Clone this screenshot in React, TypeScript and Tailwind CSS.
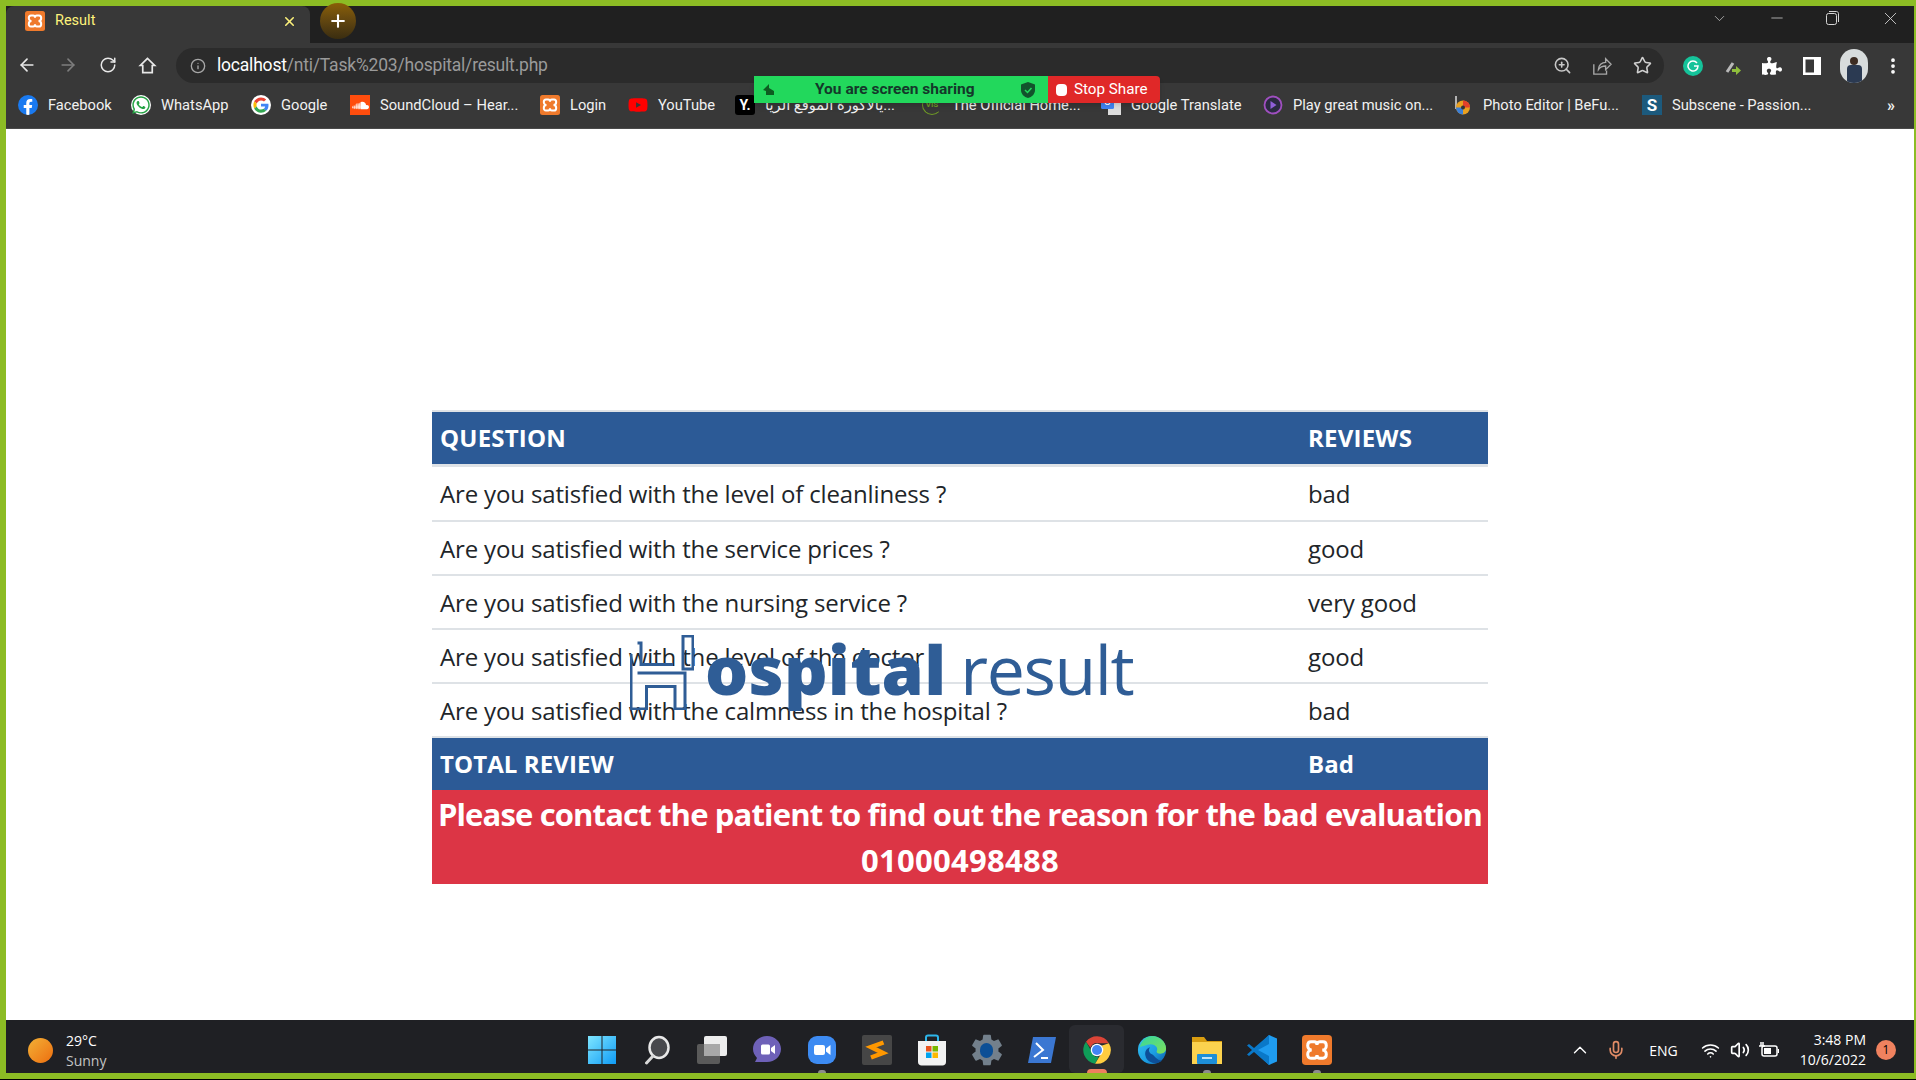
import { ArrowLeft, ArrowRight, ChevronDown, ChevronUp, Info, Mic, Minus, MoreVertical, Plus, RotateCw, Star, Volume2, Wifi, X, ZoomIn } from 'lucide-react'
import { FaFacebookF, FaPuzzlePiece, FaSoundcloud, FaWhatsapp, FaYoutube } from 'react-icons/fa'
import { IoSettingsSharp } from 'react-icons/io5'

function Xampp({ size = 20 }: { size?: number }) {
  return (
    <svg width={size} height={size} viewBox="0 0 20 20" className="shrink-0">
      <rect width="20" height="20" rx="2.5" fill="#ef7a2c" />
      <path d="M6 4.5h2.2c1.4 0 1.8 1.3 1.8 2.2 0-.9.4-2.2 1.8-2.2H14c1.6 0 2.2 1.2 2.2 2.6 0 1.5-1.1 2.9-2.7 2.9 1.6 0 2.7 1.4 2.7 2.9 0 1.4-.6 2.6-2.2 2.6h-2.2c-1.4 0-1.8-1.3-1.8-2.2 0 .9-.4 2.2-1.8 2.2H6c-1.6 0-2.2-1.2-2.2-2.6 0-1.5 1.1-2.9 2.7-2.9-1.6 0-2.7-1.4-2.7-2.9 0-1.4.6-2.6 2.2-2.6z" fill="none" stroke="#fff" strokeWidth="2" />
    </svg>
  )
}

function GoogleG() {
  return (
    <svg width="20" height="20" viewBox="0 0 48 48" className="shrink-0">
      <circle cx="24" cy="24" r="24" fill="#fff" />
      <path fill="#EA4335" d="M24 13c2.9 0 5.300 1 7.200 2.800l5.300-5.300C33.300 7.500 29 5.700 24 5.700c-7.200 0-13.400 4.100-16.400 10.100l6.200 4.800C15.200 16.200 19.200 13 24 13z" />
      <path fill="#4285F4" d="M42 24.500c0-1.300-.1-2.500-.3-3.700H24v7h10.100c-.4 2.300-1.700 4.300-3.700 5.600l6 4.600C40 34.700 42 30 42 24.500z" />
      <path fill="#FBBC05" d="M13.800 27.400c-.4-1.100-.6-2.300-.6-3.400s.2-2.300.6-3.400l-6.200-4.800C6.400 18.300 5.700 21 5.700 24s.7 5.700 1.900 8.200z" />
      <path fill="#34A853" d="M24 42.300c5 0 9.100-1.600 12.400-4.500l-6-4.600c-1.700 1.100-3.800 1.800-6.400 1.800-4.800 0-8.800-3.200-10.200-7.600l-6.200 4.800c3 6 9.200 10.100 16.400 10.100z" />
    </svg>
  )
}

function Chrome() {
  return (
    <svg width="30" height="30" viewBox="0 0 48 48">
      <path fill="#DB4437" d="M24 2a22 22 0 0 1 19 11H24a11 11 0 0 0-10.500 7.500L6.400 10.800A22 22 0 0 1 24 2z" />
      <path fill="#0F9D58" d="M6.400 10.800l9.500 16.800A9 9 0 0 0 27 34.500L21 45.800A22 22 0 0 1 6.400 10.800z" />
      <path fill="#FFCD40" d="M43 13a22 22 0 0 1-22 32.800l9.800-16.300A9 9 0 0 0 31 17z" />
      <circle cx="24" cy="24" r="10" fill="#fff" />
      <circle cx="24" cy="24" r="8" fill="#4285F4" />
    </svg>
  )
}

function Edge() {
  return (
    <svg width="30" height="32" viewBox="0 0 32 32">
      <defs>
        <linearGradient id="edgeA" x1="0" y1="0" x2="1" y2="1">
          <stop offset="0" stopColor="#35c1f1" />
          <stop offset="0.6" stopColor="#1b9de2" />
          <stop offset="1" stopColor="#0c59a4" />
        </linearGradient>
        <linearGradient id="edgeB" x1="0" y1="0" x2="1" y2="1">
          <stop offset="0" stopColor="#34d6a0" />
          <stop offset="1" stopColor="#7fe05a" />
        </linearGradient>
      </defs>
      <circle cx="16" cy="16" r="15" fill="url(#edgeA)" />
      <path d="M3 13C5 5 11 1 16 1c8 0 15 6 15 13.500 0 3.500-3 5.500-6 5.500-3 0-4.500-1.500-4-3 .5-1 1-2 0-4-2-3-6-4-10-2.500C8 11.500 5 12 3 13z" fill="url(#edgeB)" />
      <path d="M17 21c-3-1-6-4-3-8-4 1-6 5-5 9 1 5 6 8 11 8 3 0 5-1 7-3-4 1-7-3-10-6z" fill="#0d4f98" />
    </svg>
  )
}

function TaskbarIcon({ name }: { name: string }) {
  if (name === 'windows') {
    return (
      <svg width="30" height="30" viewBox="0 0 30 30">
        <defs>
          <linearGradient id="win" x1="0" y1="0" x2="1" y2="1">
            <stop offset="0" stopColor="#7fe6ff" />
            <stop offset="1" stopColor="#0f9bf5" />
          </linearGradient>
        </defs>
        <path d="M1 1h13.500v13.500H1zM15.500 1H29v13.500H15.500zM1 15.500h13.500V29H1zM15.500 15.500H29V29H15.500z" fill="url(#win)" />
      </svg>
    )
  }
  if (name === 'search') {
    return (
      <svg width="30" height="30" viewBox="0 0 30 30">
        <ellipse cx="17" cy="12.500" rx="9.500" ry="10.500" fill="#48494d" stroke="#e8e8e8" strokeWidth="2.500" />
        <path d="M11 21L4.500 28" stroke="#d8d8d8" strokeWidth="3" strokeLinecap="round" />
      </svg>
    )
  }
  if (name === 'taskview') {
    return (
      <svg width="32" height="30" viewBox="0 0 32 30">
        <rect x="1" y="9" width="23" height="20" rx="2" fill="#5a5a5a" />
        <rect x="8" y="1" width="23" height="20" rx="2" fill="#ededed" />
        <rect x="8" y="9" width="16" height="12" fill="#a8a8a8" />
      </svg>
    )
  }
  if (name === 'teams') {
    return (
      <svg width="30" height="30" viewBox="0 0 30 30">
        <path d="M15 1c8 0 14 6 14 13s-6 13-14 13H3l2-4C2.500 20 1 17.500 1 14 1 7 7 1 15 1z" fill="#6e61b8" />
        <rect x="9" y="9.500" width="9" height="10" rx="1.500" fill="#fff" />
        <path d="M19 13l4-3v9l-4-3z" fill="#fff" />
      </svg>
    )
  }
  if (name === 'zoom') {
    return (
      <svg width="30" height="30" viewBox="0 0 30 30">
        <rect x="1" y="1" width="28" height="28" rx="9" fill="#3d8bf2" />
        <rect x="7" y="10" width="11" height="10" rx="2" fill="#fff" />
        <path d="M19 13.500l4.500-3.500v10L19 16.500z" fill="#fff" />
      </svg>
    )
  }
  if (name === 'sublime') {
    return (
      <svg width="30" height="30" viewBox="0 0 30 30">
        <rect width="30" height="30" rx="2" fill="#464646" />
        <path d="M21.500 7.500L9 12l12 6L9 22.500" fill="none" stroke="#ff9800" strokeWidth="4.500" />
      </svg>
    )
  }
  if (name === 'store') {
    return (
      <svg width="30" height="32" viewBox="0 0 30 32">
        <path d="M9 7V3.500C9 2 10 1.500 11 1.500h8c1 0 2 .5 2 2V7" fill="none" stroke="#2db5ea" strokeWidth="2" />
        <path d="M1 7h28v21c0 2-1.500 3.500-3.500 3.500h-21C2.500 31.500 1 30 1 28z" fill="#f2f2f2" />
        <rect x="9" y="12" width="5.500" height="5.500" fill="#e8541f" />
        <rect x="15.500" y="12" width="5.500" height="5.500" fill="#78b800" />
        <rect x="9" y="18.500" width="5.500" height="5.500" fill="#00a3ee" />
        <rect x="15.500" y="18.500" width="5.500" height="5.500" fill="#fdb900" />
      </svg>
    )
  }
  if (name === 'settings') {
    return (
      <div className="relative flex items-center justify-center">
        <IoSettingsSharp size={34} color="#73808c" />
        <span className="absolute h-[15px] w-[13px] rounded-full bg-[#0c4f96]" />
      </div>
    )
  }
  if (name === 'powershell') {
    return (
      <svg width="30" height="30" viewBox="0 0 30 30">
        <path d="M6 2h23l-5 26H1z" fill="#3b77d2" />
        <path d="M9 8l7 7-9 7" fill="none" stroke="#fff" strokeWidth="2" />
        <path d="M14 23h7" stroke="#fff" strokeWidth="2" />
      </svg>
    )
  }
  if (name === 'chrome') return <Chrome />
  if (name === 'edge') return <Edge />
  if (name === 'folder') {
    return (
      <svg width="32" height="30" viewBox="0 0 32 30">
        <path d="M1 2h12l3 4h15v3H1z" fill="#d99d10" />
        <path d="M1 7h30v22H1z" fill="#fcd24e" />
        <rect x="6" y="19" width="20" height="10" rx="1" fill="#1e8fd8" />
        <rect x="11" y="22" width="10" height="2" fill="#bfe3f7" />
      </svg>
    )
  }
  if (name === 'vscode') {
    return (
      <svg width="32" height="32" viewBox="0 0 32 32">
        <path d="M23 1l8 3.500v23L23 31 8 17z" fill="#1f9cf0" />
        <path d="M23 1v9L12 16l11 6v9L8 18 3 22l-2-1.500L6 16 1 11.500 3 10l5 4z" fill="#0a78c8" />
      </svg>
    )
  }
  return <Xampp size={30} />
}

const bookmarks = [
  { label: 'Facebook', width: 'w-[113px]', icon: <span className="flex h-5 w-5 shrink-0 items-end justify-center overflow-hidden rounded-full bg-[#1a7af0] text-white"><FaFacebookF size={16} /></span> },
  { label: 'WhatsApp', width: 'w-[120px]', icon: <span className="flex h-5 w-5 shrink-0 items-center justify-center rounded-full bg-white"><FaWhatsapp size={20} color="#25a244" /></span> },
  { label: 'Google', width: 'w-[99px]', icon: <GoogleG /> },
  { label: 'SoundCloud – Hear...', width: 'w-[190px]', icon: <span className="flex h-5 w-5 shrink-0 items-center justify-center bg-[#ff4d0d] text-white"><FaSoundcloud size={17} /></span> },
  { label: 'Login', width: 'w-[88px]', icon: <Xampp /> },
  { label: 'YouTube', width: 'w-[107px]', icon: <span className="flex h-5 w-5 shrink-0 items-center justify-center"><FaYoutube size={20} color="#f00" /></span> },
  { label: 'يالاكورة الموقع الريا...', width: 'w-[187px]', icon: <span className="flex h-5 w-5 shrink-0 items-center justify-center rounded-[3px] bg-black text-[14px] font-bold text-white">Y.</span> },
  { label: 'The Official Home...', width: 'w-[179px]', icon: <span className="flex h-5 w-5 shrink-0 items-center justify-center rounded-full border-[1.5px] border-b-[#6f9a25] border-l-[#6f9a25] border-r-transparent border-t-transparent text-[8px] font-bold text-[#6f9a25]">VIS</span> },
  { label: 'Google Translate', width: 'w-[162px]', icon: <svg width="20" height="20" viewBox="0 0 20 20" className="shrink-0"><rect x="7" y="5" width="13" height="15" fill="#ddd" /><rect width="13" height="14" rx="1.500" fill="#4285f4" /><circle cx="6.500" cy="7" r="2.500" fill="none" stroke="#fff" strokeWidth="1.200" /></svg> },
  { label: 'Play great music on...', width: 'w-[190px]', icon: <svg width="20" height="20" viewBox="0 0 20 20" className="shrink-0"><circle cx="10" cy="10" r="8.500" fill="#2a2a40" stroke="#a04fc0" strokeWidth="1.800" /><path d="M7.500 6l6 4-6 4z" fill="#8f5fd8" /></svg> },
  { label: 'Photo Editor | BeFu...', width: 'w-[189px]', icon: <svg width="20" height="20" viewBox="0 0 20 20" className="shrink-0"><path d="M3 1v13" stroke="#ddd" strokeWidth="1.500" /><circle cx="10" cy="12.500" r="7" fill="#e9a020" /><path d="M10 5.500a7 7 0 0 1 7 7h-7z" fill="#e3402a" /><path d="M10 12.500v7a7 7 0 0 1-7-7z" fill="#3b7fd6" /><circle cx="10" cy="12.500" r="2" fill="#333" /></svg> },
  { label: 'Subscene - Passion...', width: 'w-[200px]', icon: <span className="flex h-5 w-5 shrink-0 items-center justify-center bg-[#1c5a7d] text-[17px] font-bold text-white">S</span> },
]

const taskbarIcons = ['windows', 'search', 'taskview', 'teams', 'zoom', 'sublime', 'store', 'settings', 'powershell', 'chrome', 'edge', 'folder', 'vscode', 'xampp']
const runningApps = ['zoom', 'folder', 'xampp']

const answers = [
  ['Are you satisfied with the level of cleanliness ?', 'bad'],
  ['Are you satisfied with the service prices ?', 'good'],
  ['Are you satisfied with the nursing service ?', 'very good'],
  ['Are you satisfied with the level of the doctor ?', 'good'],
  ['Are you satisfied with the calmness in the hospital ?', 'bad'],
]

export default function App() {
  return (
    <div className="relative h-[1080px] w-[1916px] overflow-hidden border-b border-black bg-[#8cbc24] pt-[6px] pr-[2px] pb-[6px] pl-[6px] font-['Open_Sans',sans-serif]">
      <div className="flex h-[1067px] flex-col bg-white">
        {/* Browser chrome */}
        <div className="font-['Roboto',sans-serif]">
          <div className="flex h-[37px] items-start bg-[#202020]">
            <div className="flex h-[37px] w-[304px] items-center rounded-t-lg bg-[#383838] pr-[13px] pb-[7px] pl-[19px]">
              <Xampp />
              <span className="ml-[10px] flex-1 text-[14.500px] text-[#fdf27b]">Result</span>
              <X size={15} color="#fdf27b" strokeWidth={2.5} />
            </div>
            <div className="mt-[-3px] ml-[10px] flex h-[36px] w-[36px] items-center justify-center rounded-full bg-gradient-to-b from-[#8a5f06] to-[#3a2d10] text-white">
              <Plus size={20} strokeWidth={2.5} />
            </div>
            <div className="ml-auto flex h-[24px] items-center text-[#d5d5d5]">
              <ChevronDown size={17} strokeWidth={1} />
              <Minus size={18} strokeWidth={1} className="ml-[40px]" />
              <svg width="13" height="14" viewBox="0 0 13 14" fill="none" stroke="currentColor" className="ml-[40px]">
                <rect x="0.500" y="2.500" width="10" height="11" rx="2" />
                <path d="M3 .5h7.500c1 0 2 1 2 2V11" />
              </svg>
              <X size={21} strokeWidth={1} className="mr-[13px] ml-[41px]" />
            </div>
          </div>

          <div className="flex h-[40px] items-end bg-[#383838]">
            <div className="mb-[8px] flex w-[170px] items-center text-[#e8e8e8]">
              <ArrowLeft size={20} className="ml-[11px]" />
              <ArrowRight size={20} color="#7d7d7d" className="ml-[21px]" />
              <RotateCw size={18} className="ml-[21px]" />
              <svg width="19" height="19" viewBox="0 0 20 20" fill="none" stroke="currentColor" strokeWidth="1.800" className="ml-[21px]">
                <path d="M10 2.500L2.500 10H5v7.500h10V10h2.500z" />
              </svg>
            </div>
            <div className="flex h-[35px] w-[1488px] items-center rounded-full bg-[#2b2b2b] pr-[9px] pl-[14px]">
              <Info size={16} color="#a8a8a8" />
              <span className="ml-[11px] flex-1 text-[17.500px] tracking-[-0.2px] text-[#9a9a9a]">
                <span className="text-white">localhost</span>/nti/Task%203/hospital/result.php
              </span>
              <ZoomIn size={19} color="#c8c8c8" />
              <svg width="20" height="20" viewBox="0 0 22 22" fill="none" stroke="#a8a8a8" strokeWidth="1.500" className="ml-[20px]">
                <path d="M2 9v11h14v-4" />
                <path d="M7 15c0-5 4-8 8-8V3l6 6-6 6v-4c-3 0-6 1-8 4z" />
              </svg>
              <Star size={19} color="#d0d0d0" className="mr-[3px] ml-[21px]" />
            </div>
            <div className="flex h-[35px] items-center text-white">
              <span className="ml-[19px] flex h-5 w-5 items-center justify-center rounded-full bg-[#15c39a]">
                <svg width="12" height="12" viewBox="0 0 12 12" fill="none" stroke="#fff" strokeWidth="1.500"><path d="M10 3a5 5 0 1 0 1 3H7" /></svg>
              </span>
              <svg width="20" height="20" viewBox="0 0 20 20" className="ml-[20px]">
                <path d="M4 16l6-9" stroke="#b9b9b9" strokeWidth="3" fill="none" />
                <path d="M9 13h4v-3l5 4.500-5 4.500v-3H9z" fill="#8fbe3c" />
              </svg>
              <FaPuzzlePiece size={20} className="ml-[19px]" />
              <svg width="18" height="18" viewBox="0 0 18 18" className="ml-[21px]"><path d="M0 0h18v18H0z" fill="#fff" /><path d="M2.500 2.500h8.500v13H2.500z" fill="#383838" /></svg>
              <span className="relative ml-[19px] h-[34px] w-[28px] overflow-hidden rounded-full bg-[#d8dcdc]">
                <span className="absolute top-[8px] left-[10px] h-[8px] w-[8px] rounded-full bg-[#3d2c22]" />
                <span className="absolute top-[16px] left-[7px] h-[18px] w-[15px] rounded-t bg-[#2b3a52]" />
              </span>
              <MoreVertical size={20} strokeWidth={2.5} className="ml-[15px]" />
            </div>
          </div>

          <div className="flex h-[46px] items-center border-b border-[#4a4a4a] bg-[#383838] pl-[12px] text-[14.700px] text-[#f1f1f1]">
            {bookmarks.map((b) => (
              <div key={b.label} className={`flex shrink-0 items-center gap-[10px] ${b.width}`}>
                {b.icon}
                <span className="whitespace-nowrap font-['Roboto','DejaVu_Sans',sans-serif]">{b.label}</span>
              </div>
            ))}
            <span className="mr-[19px] ml-auto text-[16px] font-bold">»</span>
          </div>
        </div>

        {/* Page */}
        <div className="relative flex-1">
          <div className="mx-auto mt-[281px] w-[1056px] text-[24px] tracking-[-0.15px] text-[#212529]">
            <table className="w-full border-separate border-spacing-0">
              <thead>
                <tr className="h-[57px] bg-[#2c5a96] text-left font-bold tracking-[0.2px] text-white">
                  <th className="w-[868px] border-t-2 border-b-[3px] border-[#dee2e6] px-2">QUESTION</th>
                  <th className="border-t-2 border-b-[3px] border-[#dee2e6] px-2">REVIEWS</th>
                </tr>
              </thead>
              <tbody>
                {answers.map(([question, review], i) => (
                  <tr key={question} className={i === 0 ? 'h-[55px]' : 'h-[54px]'}>
                    <td className="border-b-2 border-[#dee2e6] px-2 pt-[1px]">{question}</td>
                    <td className="border-b-2 border-[#dee2e6] px-2 pt-[1px]">{review}</td>
                  </tr>
                ))}
                <tr className="h-[52px] bg-[#2c5a96] font-bold tracking-[0.1px] text-white">
                  <td className="px-2">TOTAL REVIEW</td>
                  <td className="px-2">Bad</td>
                </tr>
              </tbody>
            </table>
            <div className="h-[94px] bg-[#dc3545] pt-[1px] text-center text-[31px] leading-[46px] font-bold text-white">
              <div className="tracking-[-0.85px]">Please contact the patient to find out the reason for the bad evaluation</div>
              <div className="tracking-[0.27px]">01000498488</div>
            </div>
          </div>

          {/* Heading that sits over the table */}
          <div className="absolute top-[506px] left-[624px] flex items-start text-[#2f5d96]">
            <svg width="64" height="75" viewBox="0 -1 64 75" fill="none" stroke="currentColor" strokeWidth="3">
              <path d="M7.500 7h3.500v21.500h32" />
              <path d="M53 0h10v33H53z" />
              <path d="M7.500 37H55v36H45V50.500H16.500V73H1V18" />
            </svg>
            <h1 className="ml-[11px] text-[68px] leading-none font-extrabold tracking-[0.2px]">ospital</h1>
            <span className="ml-[14px] text-[68px] leading-none font-medium tracking-[-1.4px]">result</span>
          </div>
        </div>

        {/* Taskbar */}
        <div className="flex h-[53px] items-end bg-[#1f2024] text-white">
          <div className="flex h-[53px] w-[568px] items-center pt-[8px] pl-[22px]">
            <span className="h-[25px] w-[25px] rounded-full bg-gradient-to-br from-[#f2b035] to-[#ec6d0c]" />
            <div className="ml-[13px] text-[14px] leading-[20px]">
              <div>29°C</div>
              <div className="text-[#c4c4c4]">Sunny</div>
            </div>
          </div>
          <div className="flex">
            {taskbarIcons.map((name) => (
              <div key={name} className={`relative flex h-[48px] w-[55px] items-center justify-center pt-[2px] ${name === 'chrome' ? 'rounded-md bg-[#2a2b30]' : ''}`}>
                <TaskbarIcon name={name} />
                {runningApps.includes(name) && <span className="absolute bottom-0 h-[3px] w-[8px] rounded-t-full bg-[#8c8c8c]" />}
                {name === 'chrome' && <span className="absolute bottom-0 h-[4px] w-[20px] rounded-t-sm bg-[#ee7f5f]" />}
              </div>
            ))}
          </div>
          <div className="ml-auto flex h-[53px] items-center pt-[7px] pr-[18px]">
            <ChevronUp size={22} strokeWidth={1.5} />
            <Mic size={20} color="#e08b66" className="ml-[15px]" />
            <span className="ml-[23px] text-[14px]">ENG</span>
            <Wifi size={19} className="ml-[23px]" />
            <Volume2 size={20} className="ml-[10px]" />
            <svg width="21" height="18" viewBox="0 0 21 18" fill="none" stroke="#fff" strokeWidth="1.500" className="ml-[8px]">
              <rect x="4" y="5" width="15" height="10" rx="2" />
              <rect x="6" y="7" width="7" height="6" fill="#fff" stroke="none" />
              <path d="M1 5h6M3 1v4M5 1v4M20.500 8v4" />
            </svg>
            <div className="ml-[21px] text-right text-[14px] leading-[20px]">
              <div>3:48 PM</div>
              <div>10/6/2022</div>
            </div>
            <span className="ml-[10px] flex h-[20px] w-[20px] items-center justify-center rounded-full bg-[#f0825f] text-[12px] text-black">1</span>
          </div>
        </div>
      </div>

      {/* Zoom share bar */}
      <div className="absolute top-[76px] left-[754px] flex h-[27px] font-['Roboto',sans-serif] shadow-md">
        <div className="flex w-[294px] items-center bg-[#22d85c] pr-[13px] pl-[8px] text-[15.500px] font-bold text-[#14382a]">
          <svg width="14" height="14" viewBox="0 0 14 14"><path d="M7 1L1 7l3 1v4h8V8L7 5z" fill="#0d5c20" /></svg>
          <span className="ml-[39px] flex-1">You are screen sharing</span>
          <svg width="14" height="16" viewBox="0 0 14 16"><path d="M7 0l7 2.500V8c0 4-3 7-7 8-4-1-7-4-7-8V2.500z" fill="#12532c" /><path d="M4 8l2.500 2.500L10.500 6" fill="none" stroke="#22d85c" strokeWidth="1.500" /></svg>
        </div>
        <div className="flex w-[112px] items-center rounded-r-sm bg-[#e02828] pl-[8px] text-[15.200px] text-white">
          <span className="h-[12px] w-[11px] rounded-sm bg-white" />
          <span className="ml-[7px] whitespace-nowrap">Stop Share</span>
        </div>
      </div>
    </div>
  )
}
